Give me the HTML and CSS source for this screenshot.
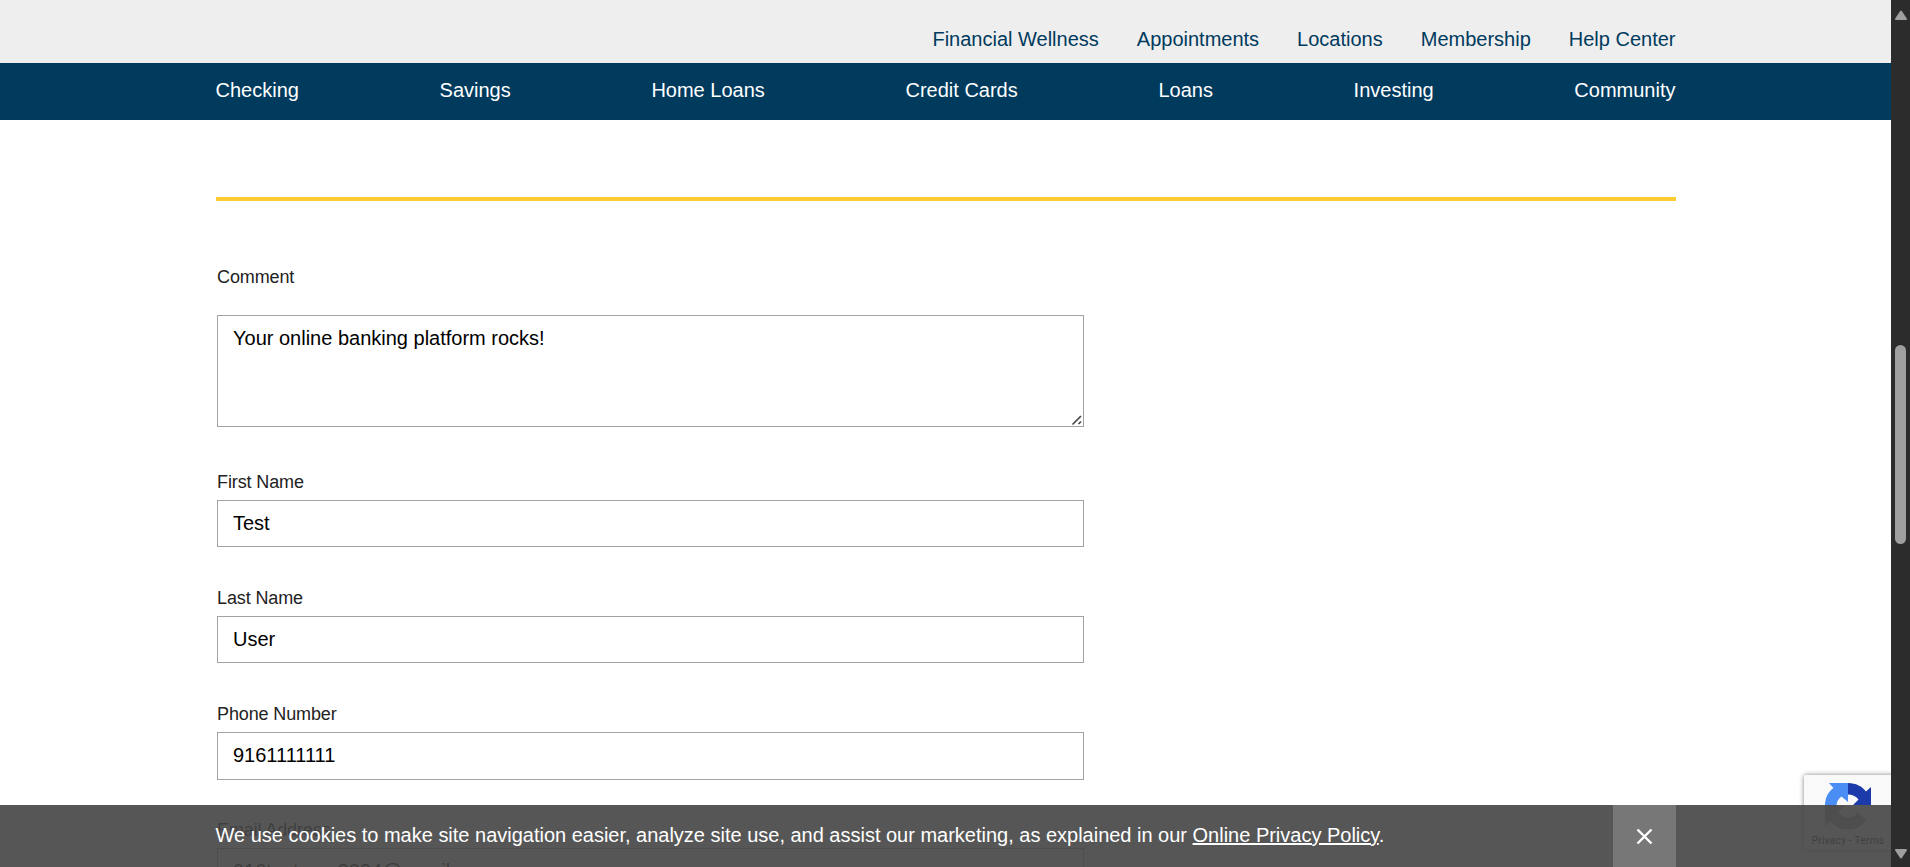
FILE: index.html
```html
<!DOCTYPE html>
<html lang="en">
<head>
<meta charset="utf-8">
<title>Feedback</title>
<link rel="stylesheet" href="styles.css">
</head>
<body>
<div class="page">
  <header>
    <div class="utility"><nav class="wrap utility-nav">
      <a href="#">Financial Wellness</a><a href="#">Appointments</a><a href="#">Locations</a><a href="#">Membership</a><a href="#">Help Center</a>
    </nav></div>
    <div class="main-bar"><nav class="wrap main-nav">
      <a href="#">Checking</a><a href="#">Savings</a><a href="#">Home Loans</a><a href="#">Credit Cards</a><a href="#">Loans</a><a href="#">Investing</a><a href="#">Community</a>
    </nav></div>
  </header>
  <main class="wrap">
    <div class="rule"></div>
    <form class="form">
      <div class="field field-comment"><label for="comment">Comment</label><div class="area"><textarea id="comment" spellcheck="false">Your online banking platform rocks!</textarea><svg class="grip" width="12" height="12" viewBox="0 0 12 12"><path d="M1.500 10.500L10 2M7.500 10L10 7.500" fill="none" stroke="#4a4a4a" stroke-width="1.700"/></svg></div></div>
      <div class="field"><label for="first">First Name</label><input id="first" value="Test"></div>
      <div class="field"><label for="last">Last Name</label><input id="last" value="User"></div>
      <div class="field"><label for="phone">Phone Number</label><input id="phone" value="9161111111"></div>
      <div class="field"><label for="email">Email Address</label><input id="email" value="916testuser2024@gmail.com"></div>
    </form>
  </main>
  <div class="captcha">
    <svg class="captcha-logo" viewBox="0 0 46 47" width="46" height="47">
      <path fill="#1c3aa9" d="M23 0C31 0 37 3.500 41 8.500L46 4V22H28L33.500 16.500C31 13 27 11.500 23 11.500Z"/>
      <path fill="#4a8df5" d="M23 0V19L16.500 13.500C13 16 11.500 19 11.500 23H0C0 15 3 9 8.500 5L4 0Z"/>
      <path fill="#ababab" d="M0 23H19L13.500 29.500C16 33 19 34.500 23 34.500C28 34.500 31 32 33 29L41 37.500C37 43 31 46.500 23 46.500C15 46.500 9.500 43.500 5.500 38L0 43Z"/>
    </svg>
    <div class="captcha-links">Privacy - Terms</div>
  </div>
  <div class="cookie"><div class="wrap cookie-row">
    <p>We use cookies to make site navigation easier, analyze site use, and assist our marketing, as explained in our <a href="#">Online Privacy Policy</a>.</p>
    <button class="close" type="button" aria-label="Close"><svg width="17" height="17" viewBox="0 0 17 17"><path d="M1.500 1.500L15.500 15.500M15.500 1.500L1.500 15.500" stroke="#fff" stroke-width="2.400"/></svg></button>
  </div></div>
</div>
<div class="scrollbar">
  <svg width="14" height="11" viewBox="0 0 14 11"><path d="M7 1.500L12 9H2Z" fill="#9f9f9f" stroke="#9f9f9f" stroke-width="2" stroke-linejoin="round"/></svg>
  <div class="thumb"></div>
  <svg width="14" height="11" viewBox="0 0 14 11"><path d="M7 9.500L12 2H2Z" fill="#9f9f9f" stroke="#9f9f9f" stroke-width="2" stroke-linejoin="round"/></svg>
</div>
</body>
</html>
```
FILE: styles.css
```css
* { box-sizing: border-box; }
body {
  margin: 0;
  height: 867px;
  overflow: hidden;
  display: flex;
  background: #fff;
  font: 20px/23px "Liberation Sans", Arial, sans-serif;
}
a { color: inherit; text-decoration: none; }
.page { position: relative; width: 1891px; height: 867px; overflow: hidden; }
.wrap { width: 1460px; margin: 0 auto; }
.utility { height: 63px; background: #eee; color: #003a5d; }
.utility-nav { display: flex; justify-content: flex-end; gap: 38px; padding-top: 28px; }
.main-bar { height: 57px; background: #003a5d; color: #fff; }
.main-nav { display: flex; justify-content: space-between; padding-top: 16px; }
.rule { height: 4px; margin-top: 77px; background: #fc3; }
.form { width: 867px; margin: 66px 0 0 1.500px; }
.field { height: 116.100px; }
.field label { display: block; height: 28px; font-size: 18px; line-height: 20px; letter-spacing: -.12px; color: #222; }
.field input, .field textarea {
  display: block;
  width: 867px;
  margin: 0;
  border: 1px solid #a2a2a2;
  border-radius: 0;
  padding: 0 15px;
  background: #fff;
  color: #000;
  font: inherit;
  outline: none;
}
.field input { height: 47.400px; }
.field-comment { height: 205px; }
.field-comment label { height: 48px; }
.field textarea { height: 112px; padding: 11px 15px; resize: none; }
.area { position: relative; }
.grip { position: absolute; right: 1px; bottom: 1px; }
.captcha {
  position: absolute;
  left: 1804px;
  top: 775px;
  width: 256px;
  height: 75px;
  border-radius: 2px;
  background: #f9f9f9;
  box-shadow: 0 0 5px #808080;
}
.captcha-logo { display: block; margin: 8px 0 0 21px; }
.captcha-links {
  width: 88px;
  margin-top: 5px;
  text-align: center;
  font: 10px/12px Roboto, sans-serif;
  letter-spacing: .3px;
  color: #222;
}
.cookie {
  position: absolute;
  left: 0;
  right: 0;
  bottom: 0;
  height: 62px;
  background: rgba(68, 68, 68, .9);
  color: #fff;
}
.cookie-row { display: flex; justify-content: space-between; height: 62px; }
.cookie p { margin: 19px 0 0; white-space: nowrap; letter-spacing: -.008px; }
.cookie a { text-decoration: underline; }
.close {
  width: 63px;
  height: 62px;
  border: 0;
  padding: 0;
  display: grid;
  place-items: center;
  background: #777;
}
.scrollbar {
  width: 19px;
  height: 867px;
  padding: 10px 0 8px;
  display: flex;
  flex-direction: column;
  align-items: center;
  background: #2c2c2c;
}
.thumb { width: 11px; height: 199px; margin: 324px 0 auto; border-radius: 6px; background: #9f9f9f; }
```
